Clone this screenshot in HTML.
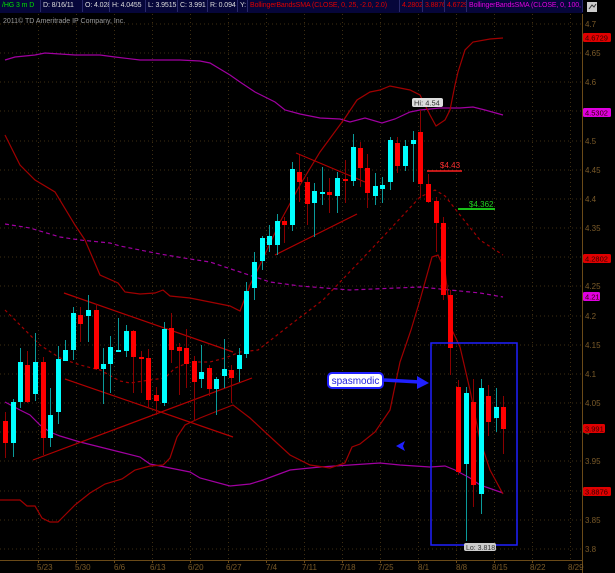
<!DOCTYPE html>
<html><head><meta charset="utf-8"><style>
html,body{margin:0;padding:0;background:#000;width:615px;height:573px;overflow:hidden;font-family:"Liberation Sans",sans-serif}
#top{position:absolute;left:0;top:0;width:583px;height:13px;background:#06063a;font-size:7px;line-height:12px;white-space:nowrap;letter-spacing:-0.1px}
#top span{position:absolute;top:0;height:12px;border-right:1px solid #2a2a6a;padding-left:2px;color:#ddd;overflow:hidden;box-sizing:border-box}
svg{position:absolute;left:0;top:0}
</style></head><body>
<svg width="615" height="573" viewBox="0 0 615 573" font-family="Liberation Sans, sans-serif">
<g stroke="#3e2e12" stroke-width="1" stroke-dasharray="1,3">
<line x1="0" y1="24" x2="582" y2="24"/><line x1="0" y1="53" x2="582" y2="53"/><line x1="0" y1="82" x2="582" y2="82"/><line x1="0" y1="111" x2="582" y2="111"/><line x1="0" y1="141" x2="582" y2="141"/><line x1="0" y1="170" x2="582" y2="170"/><line x1="0" y1="199" x2="582" y2="199"/><line x1="0" y1="228" x2="582" y2="228"/><line x1="0" y1="257" x2="582" y2="257"/><line x1="0" y1="286" x2="582" y2="286"/><line x1="0" y1="316" x2="582" y2="316"/><line x1="0" y1="345" x2="582" y2="345"/><line x1="0" y1="374" x2="582" y2="374"/><line x1="0" y1="403" x2="582" y2="403"/><line x1="0" y1="432" x2="582" y2="432"/><line x1="0" y1="461" x2="582" y2="461"/><line x1="0" y1="491" x2="582" y2="491"/><line x1="0" y1="520" x2="582" y2="520"/><line x1="0" y1="549" x2="582" y2="549"/>
<line x1="38.5" y1="14" x2="38.5" y2="560"/><line x1="76.5" y1="14" x2="76.5" y2="560"/><line x1="114.5" y1="14" x2="114.5" y2="560"/><line x1="152.5" y1="14" x2="152.5" y2="560"/><line x1="190.5" y1="14" x2="190.5" y2="560"/><line x1="228.5" y1="14" x2="228.5" y2="560"/><line x1="266.5" y1="14" x2="266.5" y2="560"/><line x1="304.5" y1="14" x2="304.5" y2="560"/><line x1="342.5" y1="14" x2="342.5" y2="560"/><line x1="380.5" y1="14" x2="380.5" y2="560"/><line x1="418.5" y1="14" x2="418.5" y2="560"/><line x1="456.5" y1="14" x2="456.5" y2="560"/><line x1="494.5" y1="14" x2="494.5" y2="560"/><line x1="532.5" y1="14" x2="532.5" y2="560"/><line x1="570.5" y1="14" x2="570.5" y2="560"/>
</g>
<line x1="0" y1="560.5" x2="582" y2="560.5" stroke="#6a4a18"/>
<line x1="582.5" y1="14" x2="582.5" y2="573" stroke="#6a4a18"/>
<g fill="#7a5a28" font-size="8">
<text x="585" y="27">4.7</text><text x="585" y="56">4.65</text><text x="585" y="85">4.6</text><text x="585" y="114">4.55</text><text x="585" y="144">4.5</text><text x="585" y="173">4.45</text><text x="585" y="202">4.4</text><text x="585" y="231">4.35</text><text x="585" y="260">4.3</text><text x="585" y="289">4.25</text><text x="585" y="319">4.2</text><text x="585" y="348">4.15</text><text x="585" y="377">4.1</text><text x="585" y="406">4.05</text><text x="585" y="435">4</text><text x="585" y="464">3.95</text><text x="585" y="494">3.9</text><text x="585" y="523">3.85</text><text x="585" y="552">3.8</text>
<text x="37" y="570">5/23</text><text x="75" y="570">5/30</text><text x="114" y="570">6/6</text><text x="150" y="570">6/13</text><text x="188" y="570">6/20</text><text x="226" y="570">6/27</text><text x="266" y="570">7/4</text><text x="302" y="570">7/11</text><text x="340" y="570">7/18</text><text x="378" y="570">7/25</text><text x="418" y="570">8/1</text><text x="456" y="570">8/8</text><text x="492" y="570">8/15</text><text x="530" y="570">8/22</text><text x="568" y="570">8/29</text>
</g>
<g stroke="#6a4a18"><line x1="38.5" y1="560" x2="38.5" y2="563"/><line x1="76.5" y1="560" x2="76.5" y2="563"/><line x1="114.5" y1="560" x2="114.5" y2="563"/><line x1="152.5" y1="560" x2="152.5" y2="563"/><line x1="190.5" y1="560" x2="190.5" y2="563"/><line x1="228.5" y1="560" x2="228.5" y2="563"/><line x1="266.5" y1="560" x2="266.5" y2="563"/><line x1="304.5" y1="560" x2="304.5" y2="563"/><line x1="342.5" y1="560" x2="342.5" y2="563"/><line x1="380.5" y1="560" x2="380.5" y2="563"/><line x1="418.5" y1="560" x2="418.5" y2="563"/><line x1="456.5" y1="560" x2="456.5" y2="563"/><line x1="494.5" y1="560" x2="494.5" y2="563"/><line x1="532.5" y1="560" x2="532.5" y2="563"/></g>
<g font-size="7.5">
<rect x="583" y="33" width="28" height="9" rx="1.5" fill="#e00000"/><text x="585" y="40.5" fill="#300">4.6729</text>
<rect x="583" y="108" width="28" height="9" rx="1.5" fill="#e000e0"/><text x="585" y="115.5" fill="#300">4.5302</text>
<rect x="583" y="254" width="28" height="9" rx="1.5" fill="#e00000"/><text x="585" y="261.5" fill="#300">4.2802</text>
<rect x="583" y="292" width="17" height="9" rx="1.5" fill="#e000e0"/><text x="585" y="299.5" fill="#300">4.21</text>
<rect x="583" y="424" width="22" height="9" rx="1.5" fill="#e00000"/><text x="585" y="431.5" fill="#300">3.991</text>
<rect x="583" y="487" width="28" height="9" rx="1.5" fill="#e00000"/><text x="585" y="494.5" fill="#300">3.8876</text>
</g>
<g fill="none" stroke="#a000a0" stroke-width="1.2">
<polyline points="5,60 15,57 35,55 45,53 60,54 75,55 100,55 115,57 140,60 180,60 200,61 210,63 230,75 240,82 255,92 275,102 285,110 300,114 320,118 340,119 350,122 365,118 382,123 395,119 410,112 420,110 440,108 460,108 473,107 485,110 503,115"/>
<polyline points="5,402 20,410 30,415 40,425 50,432 60,436 80,442 100,447 120,452 140,457 150,464 170,468 190,472 200,478 230,486 250,484 263,480 290,470 320,467 350,465 380,463 400,465 430,467 445,466 455,470 470,478 480,485 503,493"/>
<polyline stroke-dasharray="4,3" points="5,224 30,228 60,237 80,240 110,243 120,246 160,254 190,259 210,262 240,272 270,282 300,286 350,290 420,287 450,290 480,293 503,297"/>
</g>
<g fill="none" stroke="#a00000" stroke-width="1.2">
<polyline points="5,135 20,165 35,180 55,192 75,225 85,240 100,275 118,283 125,292 140,294 155,293 163,290 170,296 190,298 230,306 240,311 250,285 260,265 280,222 300,185 320,152 345,118 357,100 370,92 380,90 390,86 410,90 420,95 425,105 430,115 436,126 445,120 450,110 455,85 458,72 465,50 473,42 490,39 503,38"/>
<polyline points="0,500 20,500 27,506 35,506 42,518 50,522 58,522 65,515 75,505 90,493 105,484 122,479 135,470 150,466 163,465 170,458 177,437 185,425 200,418 215,412 233,405 250,418 265,432 290,455 310,465 330,468 345,463 352,447 360,444 375,432 390,410 400,362 411,330 420,300 432,257 438,255 445,270 452,330 460,347 470,390 480,440 490,470 503,494"/>
<polyline stroke-dasharray="3,3" points="5,310 20,325 40,345 60,358 80,365 100,370 120,381 130,383 150,380 165,378 175,368 190,362 210,362 225,358 240,352 258,350 290,325 323,300 380,240 420,197 435,190 445,196 460,215 480,240 503,255"/>
</g>
<g stroke="#b00000" stroke-width="1.2">
<line x1="64" y1="293" x2="233" y2="352"/><line x1="65" y1="379" x2="233" y2="437"/><line x1="33" y1="460" x2="252" y2="378"/>
<line x1="296" y1="153" x2="365" y2="182"/><line x1="275" y1="255" x2="357" y2="214"/>
</g>
<g stroke-width="1">
<g stroke="#8b0000"><line x1="5.5" y1="412" x2="5.5" y2="458"/><line x1="27.5" y1="351" x2="27.5" y2="403"/><line x1="43.5" y1="357" x2="43.5" y2="455"/><line x1="80.5" y1="307" x2="80.5" y2="342"/><line x1="96.5" y1="304" x2="96.5" y2="370"/><line x1="133.5" y1="330" x2="133.5" y2="393"/><line x1="141.5" y1="351" x2="141.5" y2="393"/><line x1="148.5" y1="349" x2="148.5" y2="408"/><line x1="156.5" y1="387" x2="156.5" y2="415"/><line x1="171.5" y1="313" x2="171.5" y2="363"/><line x1="179.5" y1="343" x2="179.5" y2="395"/><line x1="186.5" y1="329" x2="186.5" y2="388"/><line x1="194.5" y1="356" x2="194.5" y2="421"/><line x1="209.5" y1="365" x2="209.5" y2="396"/><line x1="231.5" y1="365" x2="231.5" y2="403"/><line x1="284.5" y1="217" x2="284.5" y2="243"/><line x1="299.5" y1="155" x2="299.5" y2="202"/><line x1="307.5" y1="177" x2="307.5" y2="225"/><line x1="329.5" y1="178" x2="329.5" y2="213"/><line x1="345.5" y1="160" x2="345.5" y2="203"/><line x1="360.5" y1="142" x2="360.5" y2="187"/><line x1="367.5" y1="154" x2="367.5" y2="208"/><line x1="397.5" y1="137" x2="397.5" y2="173"/><line x1="420.5" y1="110" x2="420.5" y2="198"/><line x1="428.5" y1="174" x2="428.5" y2="203"/><line x1="436.5" y1="197" x2="436.5" y2="252"/><line x1="443.5" y1="217" x2="443.5" y2="300"/><line x1="450.5" y1="290" x2="450.5" y2="375"/><line x1="458.5" y1="380" x2="458.5" y2="475"/><line x1="473.5" y1="379" x2="473.5" y2="507"/><line x1="488.5" y1="385" x2="488.5" y2="436"/><line x1="503.5" y1="396" x2="503.5" y2="454"/></g>
<g stroke="#0a9a9a"><line x1="13.5" y1="399" x2="13.5" y2="457"/><line x1="20.5" y1="348" x2="20.5" y2="408"/><line x1="35.5" y1="333" x2="35.5" y2="401"/><line x1="50.5" y1="388" x2="50.5" y2="447"/><line x1="58.5" y1="346" x2="58.5" y2="424"/><line x1="65.5" y1="340" x2="65.5" y2="360"/><line x1="73.5" y1="307" x2="73.5" y2="360"/><line x1="88.5" y1="295" x2="88.5" y2="342"/><line x1="103.5" y1="348" x2="103.5" y2="404"/><line x1="110.5" y1="336" x2="110.5" y2="393"/><line x1="118.5" y1="318" x2="118.5" y2="352"/><line x1="126.5" y1="325" x2="126.5" y2="357"/><line x1="164.5" y1="322" x2="164.5" y2="406"/><line x1="201.5" y1="345" x2="201.5" y2="388"/><line x1="216.5" y1="377" x2="216.5" y2="415"/><line x1="224.5" y1="339" x2="224.5" y2="388"/><line x1="239.5" y1="348" x2="239.5" y2="382"/><line x1="246.5" y1="282" x2="246.5" y2="358"/><line x1="254.5" y1="252" x2="254.5" y2="300"/><line x1="262.5" y1="236" x2="262.5" y2="270"/><line x1="269.5" y1="225" x2="269.5" y2="252"/><line x1="277.5" y1="214" x2="277.5" y2="255"/><line x1="292.5" y1="162" x2="292.5" y2="231"/><line x1="314.5" y1="183" x2="314.5" y2="237"/><line x1="322.5" y1="167" x2="322.5" y2="205"/><line x1="337.5" y1="172" x2="337.5" y2="213"/><line x1="353.5" y1="134" x2="353.5" y2="186"/><line x1="375.5" y1="173" x2="375.5" y2="205"/><line x1="382.5" y1="177" x2="382.5" y2="203"/><line x1="390.5" y1="137" x2="390.5" y2="190"/><line x1="405.5" y1="140" x2="405.5" y2="171"/><line x1="413.5" y1="131" x2="413.5" y2="182"/><line x1="466.5" y1="387" x2="466.5" y2="541"/><line x1="481.5" y1="379" x2="481.5" y2="514"/><line x1="496.5" y1="388" x2="496.5" y2="432"/></g>
<g fill="#ff0000"><rect x="3" y="421" width="5" height="22"/><rect x="25" y="365" width="5" height="37"/><rect x="41" y="362" width="5" height="76"/><rect x="78" y="315" width="5" height="9"/><rect x="94" y="310" width="5" height="59"/><rect x="131" y="331" width="5" height="26"/><rect x="139" y="357" width="5" height="2"/><rect x="146" y="358" width="5" height="42"/><rect x="154" y="395" width="5" height="6"/><rect x="169" y="328" width="5" height="22"/><rect x="177" y="347" width="5" height="4"/><rect x="184" y="348" width="5" height="16"/><rect x="192" y="361" width="5" height="21"/><rect x="207" y="368" width="5" height="21"/><rect x="229" y="370" width="5" height="8"/><rect x="282" y="221" width="5" height="4"/><rect x="297" y="172" width="5" height="10"/><rect x="305" y="182" width="5" height="22"/><rect x="327" y="192" width="5" height="3"/><rect x="343" y="179" width="5" height="2"/><rect x="358" y="148" width="5" height="20"/><rect x="365" y="168" width="5" height="25"/><rect x="395" y="143" width="5" height="23"/><rect x="418" y="132" width="5" height="52"/><rect x="426" y="184" width="5" height="18"/><rect x="434" y="201" width="5" height="22"/><rect x="441" y="223" width="5" height="72"/><rect x="448" y="295" width="5" height="53"/><rect x="456" y="387" width="5" height="85"/><rect x="471" y="402" width="5" height="83"/><rect x="486" y="396" width="5" height="26"/><rect x="501" y="407" width="5" height="22"/></g>
<g fill="#00ffff"><rect x="11" y="402" width="5" height="41"/><rect x="18" y="362" width="5" height="40"/><rect x="33" y="362" width="5" height="32"/><rect x="48" y="415" width="5" height="23"/><rect x="56" y="359" width="5" height="53"/><rect x="63" y="350" width="5" height="11"/><rect x="71" y="313" width="5" height="37"/><rect x="86" y="310" width="5" height="6"/><rect x="101" y="364" width="5" height="5"/><rect x="108" y="347" width="5" height="17"/><rect x="116" y="350" width="5" height="2"/><rect x="124" y="331" width="5" height="20"/><rect x="162" y="329" width="5" height="74"/><rect x="199" y="372" width="5" height="7"/><rect x="214" y="379" width="5" height="10"/><rect x="222" y="369" width="5" height="7"/><rect x="237" y="355" width="5" height="14"/><rect x="244" y="291" width="5" height="63"/><rect x="252" y="262" width="5" height="26"/><rect x="260" y="238" width="5" height="23"/><rect x="267" y="236" width="5" height="9"/><rect x="275" y="221" width="5" height="24"/><rect x="290" y="169" width="5" height="56"/><rect x="312" y="191" width="5" height="12"/><rect x="320" y="192" width="5" height="2"/><rect x="335" y="178" width="5" height="18"/><rect x="351" y="147" width="5" height="34"/><rect x="373" y="186" width="5" height="10"/><rect x="380" y="185" width="5" height="4"/><rect x="388" y="140" width="5" height="42"/><rect x="403" y="146" width="5" height="20"/><rect x="411" y="140" width="5" height="4"/><rect x="464" y="393" width="5" height="71"/><rect x="479" y="388" width="5" height="106"/><rect x="494" y="407" width="5" height="11"/></g>
</g>
<rect x="431" y="343" width="86" height="202" fill="none" stroke="#2020ff" stroke-width="1.5"/>
<rect x="464" y="543" width="32" height="8" rx="2" fill="#ccc"/><text x="466" y="550" font-size="7" fill="#333">Lo: 3.818</text>
<rect x="412" y="98" width="31" height="9" rx="2" fill="#ddd"/><text x="414" y="105.5" font-size="7.5" fill="#333">Hi: 4.54</text>
<line x1="427" y1="171" x2="462" y2="171" stroke="#ff2020" stroke-width="1.5"/><text x="440" y="168" font-size="8" fill="#ff3030">$4.43</text>
<line x1="458" y1="209" x2="495" y2="209" stroke="#20ff20" stroke-width="1.5"/><text x="469" y="207" font-size="8" fill="#20d020">$4.362</text>
<path d="M384 380 L420 382" stroke="#2020ff" stroke-width="3.5" fill="none"/>
<path d="M417 376 L429 383 L417 389 Z" fill="#2020ff"/>
<rect x="328" y="373" width="55" height="15" rx="4" fill="#fff" stroke="#2020ff" stroke-width="2"/>
<text x="355.5" y="384" font-size="10" fill="#2020e0" text-anchor="middle">spasmodic</text>
<path d="M396 446 L405 441 L403 446 L405 451 Z" fill="#2020ff"/>
<text x="3" y="23" font-size="7" fill="#9a9a9a">2011© TD Ameritrade IP Company, Inc.</text>
<rect x="587" y="2" width="10" height="10" fill="#ccc"/><path d="M589 9 L592 5 L594 7 L596 4" stroke="#333" fill="none"/>
</svg>
<div id="top">
<span style="left:0;width:41px;color:#00e000">/HG 3 m D</span>
<span style="left:41px;width:42px">D: 8/16/11</span>
<span style="left:83px;width:27px">O: 4.028</span>
<span style="left:110px;width:36px">H: 4.0455</span>
<span style="left:146px;width:32px">L: 3.9515</span>
<span style="left:178px;width:30px">C: 3.991</span>
<span style="left:208px;width:30px">R: 0.094</span>
<span style="left:238px;width:10px">Y:</span>
<span style="left:248px;width:152px;color:#e00000">BollingerBandsSMA (CLOSE, 0, 25, -2.0, 2.0)</span>
<span style="left:400px;width:23px;color:#e00000">4.2802</span>
<span style="left:423px;width:22px;color:#e00000">3.8876</span>
<span style="left:445px;width:22px;color:#e00000">4.6729</span>
<span style="left:467px;width:116px;color:#e000e0">BollingerBandsSMA (CLOSE, 0, 100, -...</span>
</div>
</body></html>
